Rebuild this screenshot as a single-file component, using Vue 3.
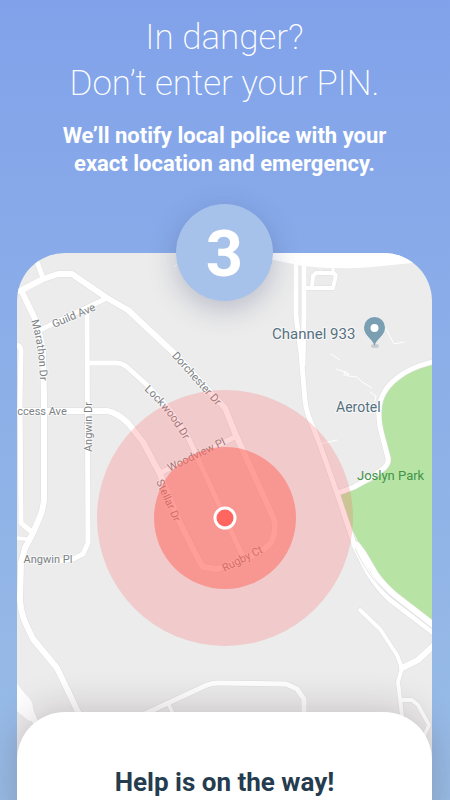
<script setup>
const roads = [
  { w: 6, d: 'M20 291 L43 279 L58 274 L72 274 L107 298 L128 310 L175 354 L211 393 L225 408 L235 433 L245 455 L273 517 Q276 523 274 535 L271 543 L263 550 L243 560 L217 569 L203 567 L197 557 L180 523 L160 474 L143 442 L128 423 Q116 412 107 411 L17 411' },
  { w: 5, d: 'M37 262 L43 278' },
  { w: 6, d: 'M22 292 L37 323 L43 350 L44 400 L44 500 Q43 508 41 514 L33 533 L25 548 L21 563 L20 600 Q21 612 25 622 L33 639 L57 668 L79 714' },
  { w: 5, d: 'M40 330 L107 298' },
  { w: 5, d: 'M87 314 L88 543 L83 554 L73 559 L60 561' },
  { w: 5, d: 'M88 363 L116 363 Q122 363 127 367 L147 385 L170 410 L188 437 L220 507 L243 557' },
  { w: 5, d: 'M160 473 L235 437' },
  { w: 5, d: 'M15 345 Q21 345 21 351 L20 400 L21 523 L32 532' },
  { w: 4, d: 'M14 538 L28 539' },
  { w: 6, d: 'M26 700 L37 726' },
  { w: 5, d: 'M138 717 L207 685 Q213 683 218 683 L286 684 L297 689 L304 699 L304 716' },
  { w: 4, d: 'M168 703 L174 716' },
  { w: 5, d: 'M296 262 L296 315 Q298 335 301 353 L305 400 Q306 412 313 427 L320 445 L337 493 L353 541 L358 552' },
  { w: 5, d: 'M304 262 L304 315 L303 365' },
  { w: 4, d: 'M305 288 L333 288 L336 275 L333 273 L316 273 L313 276 L312 287' },
  { w: 3, d: 'M333 265 L333 274' },
  { w: 1, d: 'M320 265 L320 274' },
  { w: 5, d: 'M436 361 Q410 367 397 378 Q380 391 379 410 Q378 422 383 439 L388 458 Q389 463 384 468 L370 478 L354 487 L338 493' },
  { w: 5, d: 'M354 545 L368 573 Q379 590 390 600 L436 635' },
  { w: 6, d: 'M357 545 L363 553 L376 575 Q385 587 396 596 L436 627' },
  { w: 4, d: 'M360 610 L380 629 L397 655 L402 668 L398 682 L402 716' },
  { w: 6, d: 'M402 668 L418 660 L436 643' },
  { w: 4, d: 'M401 700 L412 700 L418 705 L429 725 L423 738' },
]

const traces = [
  'M386 329 L394 344 L404 342',
  'M331 354 L340 360',
  'M336 369 L345 372 L348 376 L357 377 L362 382 L372 388',
  'M344 375 L345 371 L349 374 Z',
  'M370 392 L376 396 L375 401',
  'M320 444 L337 440',
  'M177 264 L174 267',
]

const streets = [
  { t: 'Guild Ave', x: 75, y: 319, r: -23 },
  { t: 'Dorchester Dr', x: 194, y: 381, r: 48 },
  { t: 'Woodview Pl', x: 198, y: 458, r: -26 },
  { t: 'Stellar Dr', x: 165, y: 502, r: 66 },
  { t: 'Rugby Ct', x: 244, y: 562, r: -27 },
  { t: 'Angwin Dr', x: 92, y: 427, r: -90 },
  { t: 'ccess Ave', x: 42, y: 415, r: 0 },
  { t: 'Angwin Pl', x: 48, y: 563, r: 0 },
]
</script>

<template>
  <main class="page">
    <header class="intro">
      <h1>In danger?<br />Don’t enter your PIN.</h1>
      <p>We’ll notify local police with your<br />exact location and emergency.</p>
    </header>
    <div class="badge">3</div>
    <section class="card">
      <svg class="map" viewBox="17 253 415 507" role="img" aria-label="Map of your location">
        <path class="park" d="M436 364 Q412 368 398 379 Q382 391 381 410 Q380 422 385 439 L391 459 Q391 465 386 470 L372 481 L340 495 L353 531 L363 551 L380 581 L397 599 L436 628 Z" />
        <g class="casing">
          <path v-for="(road, i) in roads" :key="i" :d="road.d" :stroke-width="road.w + 1" />
        </g>
        <path class="highway" d="M260 250 L264 258 L303 266 Q340 270 372 267 L412 263 L436 256 V250 Z" />
        <path class="highway" d="M14 680 L25 694 Q33 700 33 709 L37 723 L28 720 L14 709 Z" />
        <g class="surface">
          <path v-for="(road, i) in roads" :key="i" :d="road.d" :stroke-width="road.w" />
        </g>
        <path class="median" d="M355 548 Q360 560 371 576 Q380 588 392 598 L436 632" />
        <path class="median" d="M300 266 L300 314" />
        <g class="traces">
          <path v-for="(d, i) in traces" :key="i" :d="d" />
        </g>

        <g class="street">
          <text
            v-for="s in streets"
            :key="s.t"
            :transform="`translate(${s.x} ${s.y}) rotate(${s.r})`"
          >{{ s.t }}</text>
        </g>
        <g class="street along">
          <path id="marathon" d="M31 321 Q40 348 40 390" />
          <path id="lockwood" d="M144 390 Q170 413 187 446" />
          <text><textPath href="#marathon">Marathon Dr</textPath></text>
          <text><textPath href="#lockwood">Lockwood Dr</textPath></text>
        </g>

        <text class="place" x="272" y="339">Channel 933</text>
        <text class="place small" x="336" y="412">Aerotel</text>
        <text class="place green" x="357" y="480">Joslyn Park</text>

        <ellipse class="pin-shadow" cx="375" cy="346" rx="4" ry="2" />
        <path class="pin" d="M374.500 346 C373 339 364 336 364 327.500 A10.500 10.500 0 0 1 385 327.500 C385 336 376 339 374.500 346 Z" />
        <circle class="pin-hole" cx="374.500" cy="328" r="4" />

        <circle class="zone" cx="225" cy="518" r="128" />
        <circle class="zone-inner" cx="225" cy="518" r="71" />
        <circle class="dot" cx="225" cy="518" r="10" />
      </svg>
      <div class="sheet">
        <h2>Help is on the way!</h2>
      </div>
    </section>
  </main>
</template>

<style>
body {
  margin: 0;
}
</style>

<style scoped>
.page {
  box-sizing: border-box;
  height: 100vh;
  overflow: hidden;
  display: flex;
  flex-direction: column;
  align-items: center;
  padding: 15px 18px 0 17px;
  background: linear-gradient(#81a2ea, #99bde6);
  font-family: Roboto, "Liberation Sans", sans-serif;
  color: #fff;
}
.intro {
  text-align: center;
}
h1 {
  margin: 0;
  font-size: 35px;
  line-height: 46px;
  font-weight: 200;
}
p {
  margin: 15px 0 0;
  font-size: 22px;
  line-height: 28px;
  font-weight: 700;
}
.badge {
  z-index: 1;
  flex: none;
  box-sizing: border-box;
  display: flex;
  align-items: center;
  justify-content: center;
  width: 97px;
  height: 97px;
  margin: 26px 0 -48px;
  padding-top: 2px;
  border-radius: 50%;
  background: #a6c2ea;
  box-shadow: 0 8px 28px rgba(50, 60, 110, 0.28);
  font-size: 65px;
  line-height: 72px;
  font-weight: 700;
}
.card {
  flex: 1 0 auto;
  display: flex;
  flex-direction: column;
  width: 100%;
  max-width: 640px;
}
.map {
  display: block;
  width: 100%;
  border-radius: 48px 48px 0 0;
  background: #ececec;
}
.sheet {
  position: relative;
  flex: 1 0 auto;
  margin-top: -48px;
  padding: 54px 24px 32px;
  border-radius: 48px 48px 0 0;
  background: #fff;
  box-shadow: 0 0 40px rgba(60, 30, 40, 0.24);
  text-align: center;
}
h2 {
  margin: 0;
  font-size: 26px;
  line-height: 32px;
  font-weight: 700;
  color: #253c4f;
}
.park {
  fill: #b7e4a4;
}
.casing,
.surface,
.traces {
  fill: none;
  stroke-linejoin: round;
  stroke-linecap: round;
}
.casing {
  stroke: #dedede;
}
.surface {
  stroke: #fff;
}
.traces {
  stroke: #fff;
  stroke-width: 1;
}
.highway {
  fill: #fff;
}
.median {
  fill: none;
  stroke: #e6e6e6;
  stroke-width: 1;
}
.street {
  font-size: 11px;
  fill: #7c8184;
  text-anchor: middle;
}
.street text,
.place {
  stroke: rgba(255, 255, 255, 0.6);
  stroke-width: 2px;
  paint-order: stroke;
}
.along {
  text-anchor: start;
}
.along path {
  fill: none;
}
.place {
  font-size: 15px;
  fill: #557180;
}
.small {
  font-size: 14px;
}
.green {
  font-size: 13px;
  fill: #43934a;
  stroke: none;
}
.pin {
  fill: #7a9fb2;
}
.pin-shadow {
  fill: #c8cdd0;
}
.pin-hole {
  fill: #fff;
}
.zone {
  fill: rgba(255, 105, 105, 0.25);
}
.zone-inner {
  fill: rgba(255, 99, 90, 0.5);
}
.dot {
  fill: #ff665f;
  stroke: #fff;
  stroke-width: 3;
}
</style>
